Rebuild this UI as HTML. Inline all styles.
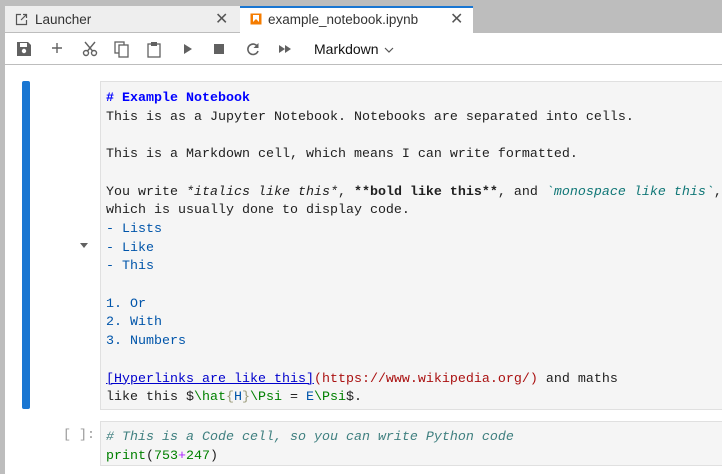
<!DOCTYPE html>
<html><head><style>
body{margin:0;width:722px;height:474px;overflow:hidden;background:#bdbdbd;font-family:"Liberation Sans",sans-serif;position:relative}
.tabbar{position:absolute;left:5px;top:6px;width:717px;height:27px;}
.tab{position:absolute;top:0;height:27px;font-size:13.5px;color:#333;box-sizing:border-box}
.t1{left:0;width:235px;background:#eee;border-bottom:1px solid #bdbdbd}
.t2{left:235px;width:233px;background:#fff;border-top:2px solid #1976d2}
.tab span.l{position:absolute;top:6px}
.x{position:absolute;font-size:16px;color:#555;top:3px}
.main{position:absolute;left:5px;top:33px;width:717px;height:441px;background:#fff}
.toolbar{position:absolute;left:0;top:0;width:717px;height:31px;border-bottom:1px solid #bdbdbd}
.ic{position:absolute;top:8px}
.cell{position:absolute;left:95px;width:640px;background:#f5f5f5;border:1px solid #e0e0e0;box-sizing:border-box;font-family:"Liberation Mono",monospace;font-size:13.33px;line-height:18.7px;color:#212121;padding:8px 0 0 5px;white-space:pre}
.h{color:#0000ff;font-weight:bold}.b{color:#0055aa}.lk{color:#0000cc;text-decoration:underline}.u{color:#aa1111}.g{color:#008000}.y{color:#999977}.c{color:#408080;font-style:italic}.m{color:#aa22ff}.t{color:#117777;font-style:italic}
</style></head><body>
<div class="tabbar">
 <div class="tab t1">
  <svg style="position:absolute;left:10px;top:7px" width="13" height="13" viewBox="0 0 13 13"><path d="M6 1.5H1.5v10h10V7" fill="none" stroke="#555" stroke-width="1.2"/><path d="M8 1.5h3.5V5M11.5 1.5L6 7" fill="none" stroke="#555" stroke-width="1.2"/></svg>
  <span class="l" style="left:30px">Launcher</span><span class="x" style="left:210px">✕</span></div>
 <div class="tab t2">
  <svg style="position:absolute;left:10px;top:5px" width="12" height="12"><rect x="0.5" y="0.5" width="11" height="11" fill="#f57c00"/><rect x="3" y="2" width="6" height="7" fill="#fff"/><path d="M3 9L6 6L9 9Z" fill="#f57c00"/></svg>
  <span class="l" style="left:28px;top:4px">example_notebook.ipynb</span><span class="x" style="left:210px;top:1px">✕</span></div>
</div>
<div class="main">
 <div class="toolbar">
  <svg class="ic" style="left:11px" width="16" height="16"><path d="M1 1h11l3 3v11H1z" fill="#616161"/><rect x="4" y="2" width="7" height="4" fill="#fff"/><circle cx="8" cy="10" r="2.2" fill="#fff"/></svg>
  <svg class="ic" style="left:45px" width="14" height="14"><path d="M7 2v10M2 7h10" stroke="#616161" stroke-width="1.4"/></svg>
  <svg class="ic" style="left:77px" width="16" height="16"><circle cx="4" cy="12" r="2.5" fill="none" stroke="#616161" stroke-width="1.4"/><circle cx="12" cy="12" r="2.5" fill="none" stroke="#616161" stroke-width="1.4"/><path d="M5.5 10L13 1M10.5 10L3 1" stroke="#616161" stroke-width="1.4"/></svg>
  <svg class="ic" style="left:109px" width="16" height="17"><rect x="1" y="1" width="9" height="11" fill="none" stroke="#616161" stroke-width="1.3"/><rect x="5" y="4" width="9" height="12" fill="#fff" stroke="#616161" stroke-width="1.3"/></svg>
  <svg class="ic" style="left:142px" width="15" height="17"><rect x="1" y="3" width="12" height="13" fill="none" stroke="#616161" stroke-width="1.3"/><rect x="4" y="1" width="6" height="4" fill="#616161"/></svg>
  <svg class="ic" style="left:178px;top:11px" width="10" height="10"><path d="M1 0L9 5L1 10Z" fill="#616161"/></svg>
  <svg class="ic" style="left:209px;top:11px" width="10" height="10"><rect width="10" height="10" fill="#616161"/></svg>
  <svg class="ic" style="left:241px;top:9px" width="14" height="14"><path d="M11.5 4.5A5.2 5.2 0 1 0 12 9" fill="none" stroke="#616161" stroke-width="1.6"/><path d="M12.5 1v5h-5z" fill="#616161"/></svg>
  <svg class="ic" style="left:274px;top:11px" width="13" height="10"><path d="M0 1L6 5L0 9ZM6 1L12 5L6 9Z" fill="#616161"/></svg>
  <span style="position:absolute;left:309px;top:8px;font-size:14px;color:#111">Markdown</span>
  <svg style="position:absolute;left:379px;top:14px" width="10" height="6"><path d="M1 1L5 5L9 1" fill="none" stroke="#555" stroke-width="1.2"/></svg>
 </div>
 <div style="position:absolute;left:17px;top:48px;width:8px;height:328px;background:#1976d2;border-radius:2px"></div>
 <svg style="position:absolute;left:75px;top:210px" width="8" height="5"><path d="M0 0H8L4 5Z" fill="#616161"/></svg>
 <div class="cell" style="top:48px;height:329px"><span class="h"># Example Notebook</span>
This is as a Jupyter Notebook. Notebooks are separated into cells.

This is a Markdown cell, which means I can write formatted.

You write <i>*italics like this*</i>, <b>**bold like this**</b>, and <span class="t">`monospace like this`</span>,
which is usually done to display code.
<span class="b">- Lists</span>
<span class="b">- Like</span>
<span class="b">- This</span>

<span class="b">1. Or</span>
<span class="b">2. With</span>
<span class="b">3. Numbers</span>

<span class="lk">[Hyperlinks are like this]</span><span class="u">(https://www.wikipedia.org/)</span> and maths
like this $<span class="g">\hat</span><span class="y">{</span><span class="b">H</span><span class="y">}</span><span class="g">\Psi</span> = <span class="b">E</span><span class="g">\Psi</span>$.</div>
 <div style="position:absolute;left:58px;top:395px;font-family:'Liberation Mono',monospace;font-size:13.33px;color:#999">[ ]:</div>
 <div class="cell" style="top:388px;height:45px;padding-top:7px"><span class="c"># This is a Code cell, so you can write Python code</span>
<span class="g">print</span>(<span class="g">753</span><span class="m">+</span><span class="g">247</span>)</div>
</div>
</body></html>
